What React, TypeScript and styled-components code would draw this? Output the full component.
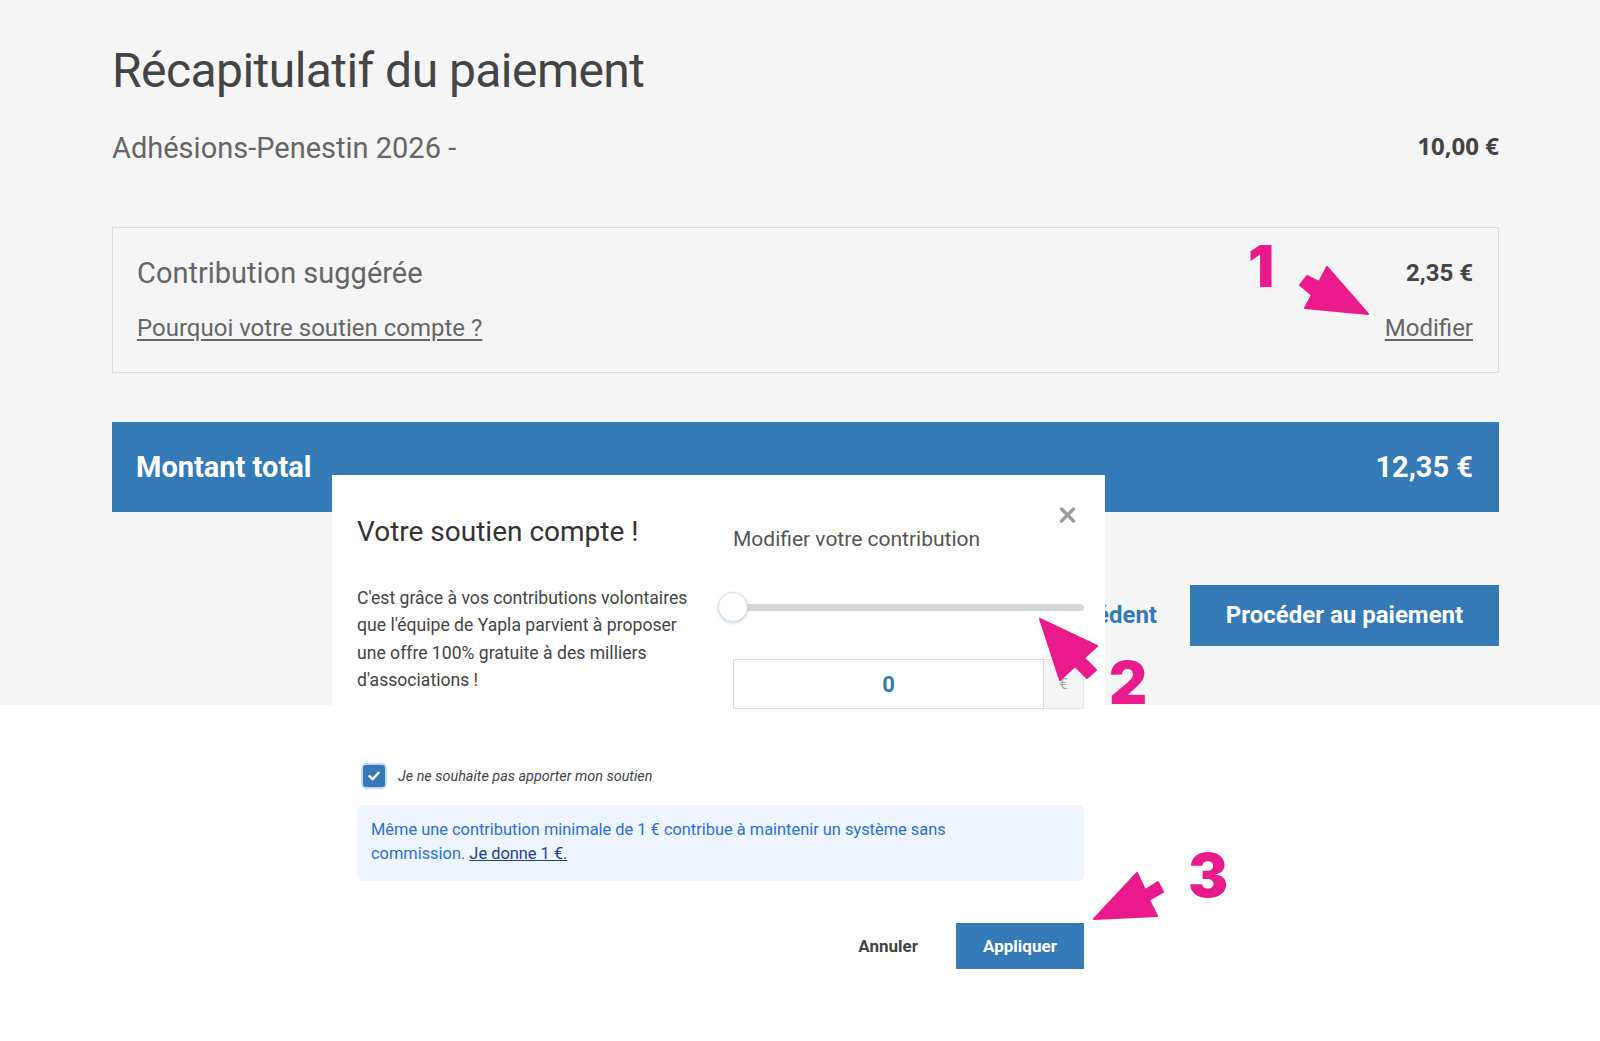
import styled, { createGlobalStyle } from "styled-components"

const GlobalStyle = createGlobalStyle`
  html, body {
    margin: 0;
    padding: 0;
    background: #ffffff;
    font-family: Roboto, "Liberation Sans", Arial, sans-serif;
  }
  * {
    box-sizing: border-box;
  }
`

const blue = "#337ab7"
const pink = "#ea1a8c"

const Page = styled.div`
  position: relative;
  width: 1600px;
  min-height: 1041px;
`

const Summary = styled.section`
  height: 705px;
  background: #f5f5f5;
  padding: 42px 0 0 112px;
`

const Content = styled.div`
  width: 1387px;
`

const Title = styled.h1`
  margin: 0;
  font-size: 48px;
  line-height: 1.2;
  font-weight: 400;
  letter-spacing: -0.55px;
  color: #444444;
`

const LineRow = styled.div`
  margin-top: 31px;
  display: flex;
  align-items: center;
  justify-content: space-between;
`

const LineLabel = styled.span`
  font-size: 29px;
  line-height: 1.2;
  color: #666666;
`

const LineAmount = styled.span`
  font-family: "Open Sans", Roboto, sans-serif;
  font-size: 24px;
  line-height: 1.2;
  font-weight: 700;
  color: #444444;
  margin-top: -3px;
`

const ContributionBox = styled.div`
  margin-top: 62px;
  border: 1px solid #dcdcdc;
  padding: 28px 25px 29px 24px;
  display: flex;
  flex-direction: column;
  gap: 23px;
`

const BoxRow = styled.div`
  display: flex;
  align-items: center;
  justify-content: space-between;
`

const BoxLabel = styled.span`
  font-size: 29px;
  line-height: 1.2;
  color: #666666;
`

const BoxAmount = styled.span`
  font-size: 24px;
  line-height: 1.2;
  font-weight: 700;
  color: #444444;
`

const TextLink = styled.a`
  font-size: 24px;
  line-height: 1.2;
  color: #666666;
  text-decoration: underline;
  text-underline-offset: 3px;
  cursor: pointer;
`

const TotalBar = styled.div`
  margin-top: 49px;
  height: 90px;
  background: ${blue};
  color: #ffffff;
  padding: 0 26px 0 24px;
  display: flex;
  align-items: center;
  justify-content: space-between;
  font-size: 29px;
  font-weight: 700;
`

const Actions = styled.div`
  margin-top: 73px;
  display: flex;
  align-items: center;
  justify-content: flex-end;
  gap: 33px;
`

const BackLink = styled.a`
  font-size: 24px;
  font-weight: 700;
  color: ${blue};
  cursor: pointer;
`

const PrimaryButton = styled.button<{ $large?: boolean }>`
  border: none;
  background: ${blue};
  color: #ffffff;
  font-family: inherit;
  font-weight: 700;
  font-size: ${(p) => (p.$large ? "24px" : "17px")};
  height: ${(p) => (p.$large ? "61px" : "46px")};
  width: ${(p) => (p.$large ? "309px" : "128px")};
  cursor: pointer;
`

const Modal = styled.div`
  position: absolute;
  left: 332px;
  top: 475px;
  width: 773px;
  background: #ffffff;
  padding: 40px 21px 40px 25px;
  z-index: 2;
`

const CloseButton = styled.button`
  position: absolute;
  top: 31px;
  right: 29px;
  width: 18px;
  height: 18px;
  padding: 0;
  border: none;
  background: none;
  display: flex;
  align-items: center;
  justify-content: center;
  cursor: pointer;
`

const ModalGrid = styled.div`
  display: grid;
  grid-template-columns: 350px 351px;
  column-gap: 26px;
`

const Column = styled.div<{ $offset?: number }>`
  display: flex;
  flex-direction: column;
  padding-top: ${(p) => p.$offset ?? 0}px;
`

const ModalTitle = styled.h2`
  margin: 0;
  font-size: 28px;
  line-height: 1.2;
  font-weight: 400;
  color: #333333;
`

const ModalText = styled.p`
  margin: 36px 0 0;
  font-size: 17.6px;
  line-height: 27.5px;
  color: #444444;
`

const FieldLabel = styled.div`
  font-size: 21px;
  line-height: 25px;
  color: #555555;
`

const Slider = styled.div`
  position: relative;
  margin-top: 40px;
  height: 30px;
  display: flex;
  align-items: center;
`

const SliderTrack = styled.div`
  width: 100%;
  height: 7px;
  border-radius: 4px;
  background: #d2d5da;
`

const SliderThumb = styled.div`
  position: absolute;
  left: -15px;
  top: 0;
  width: 30px;
  height: 30px;
  border-radius: 50%;
  background: #ffffff;
  border: 1px solid #d6deea;
  box-shadow: 0 1px 3px rgba(51, 122, 183, 0.35);
`

const AmountField = styled.div`
  margin-top: 37px;
  display: flex;
  height: 50px;
`

const AmountInput = styled.input`
  width: 311px;
  height: 50px;
  border: 1px solid #d9d9d9;
  text-align: center;
  font-family: inherit;
  font-size: 22px;
  font-weight: 700;
  color: ${blue};
  outline: none;
`

const AmountAddon = styled.span`
  flex: 1;
  display: flex;
  align-items: center;
  justify-content: center;
  background: #f4f5f7;
  border: 1px solid #e6e6e6;
  border-left: none;
  border-radius: 0 3px 3px 0;
  color: #a8a8a8;
  font-size: 15px;
`

const CheckRow = styled.label`
  margin-top: 54px;
  padding-left: 6px;
  display: flex;
  align-items: center;
  gap: 13px;
  height: 26px;
`

const CheckBox = styled.span`
  width: 22px;
  height: 22px;
  border-radius: 3px;
  background: ${blue};
  box-shadow: 0 0 0 2px #c6d9f0;
  display: flex;
  align-items: center;
  justify-content: center;
`

const CheckLabel = styled.span`
  font-size: 14.4px;
  font-style: italic;
  color: #444444;
`

const InfoBox = styled.div`
  margin-top: 16px;
  padding: 13px 14px 15px;
  border-radius: 6px;
  background: #eef5fe;
`

const InfoText = styled.p`
  margin: 0;
  max-width: 620px;
  font-size: 16.4px;
  line-height: 24px;
  color: #2d6fd6;
`

const InfoLink = styled.a`
  color: #1c3f94;
  text-decoration: underline;
  cursor: pointer;
`

const ModalFooter = styled.div`
  margin-top: 42px;
  display: flex;
  align-items: center;
  justify-content: flex-end;
  gap: 38px;
`

const GhostButton = styled.button`
  border: none;
  background: none;
  padding: 0;
  font-family: inherit;
  font-size: 17px;
  font-weight: 700;
  color: #444444;
  cursor: pointer;
`

const Annotation = styled.span<{ $left: number; $top: number; $size: number }>`
  position: absolute;
  left: ${(p) => p.$left}px;
  top: ${(p) => p.$top}px;
  font-family: Inter, "DejaVu Sans", sans-serif;
  font-weight: 900;
  font-size: ${(p) => p.$size}px;
  line-height: 1;
  color: ${pink};
  z-index: 5;
`

const ArrowSvg = styled.svg<{ $left: number; $top: number }>`
  position: absolute;
  left: ${(p) => p.$left}px;
  top: ${(p) => p.$top}px;
  z-index: 5;
  overflow: visible;
`

type ArrowProps = Readonly<{
  left: number
  top: number
  width: number
  height: number
  points: string
}>

const Arrow = ({ left, top, width, height, points }: ArrowProps) => (
  <ArrowSvg
    $left={left}
    $top={top}
    width={width}
    height={height}
    viewBox={`0 0 ${width} ${height}`}
  >
    <polygon
      points={points}
      fill={pink}
      stroke={pink}
      strokeWidth={2}
      strokeLinejoin="round"
    />
  </ArrowSvg>
)

const App = () => (
  <Page>
    <GlobalStyle />
    <Summary>
      <Content>
        <Title>Récapitulatif du paiement</Title>
        <LineRow>
          <LineLabel>Adhésions-Penestin 2026 -</LineLabel>
          <LineAmount>10,00 €</LineAmount>
        </LineRow>
        <ContributionBox>
          <BoxRow>
            <BoxLabel>Contribution suggérée</BoxLabel>
            <BoxAmount>2,35 €</BoxAmount>
          </BoxRow>
          <BoxRow>
            <TextLink>Pourquoi votre soutien compte ?</TextLink>
            <TextLink>Modifier</TextLink>
          </BoxRow>
        </ContributionBox>
        <TotalBar>
          <span>Montant total</span>
          <span>12,35 €</span>
        </TotalBar>
        <Actions>
          <BackLink>Précédent</BackLink>
          <PrimaryButton $large>Procéder au paiement</PrimaryButton>
        </Actions>
      </Content>
    </Summary>

    <Modal role="dialog">
      <CloseButton aria-label="Fermer">
        <svg width="17" height="16" viewBox="0 0 17 16">
          <path
            d="M2.5 2 L14.5 14 M14.5 2 L2.5 14"
            stroke="#9b9b9b"
            strokeWidth="3.4"
            strokeLinecap="round"
          />
        </svg>
      </CloseButton>
      <ModalGrid>
        <Column>
          <ModalTitle>Votre soutien compte !</ModalTitle>
          <ModalText>
            C'est grâce à vos contributions volontaires
            <br />
            que l'équipe de Yapla parvient à proposer
            <br />
            une offre 100% gratuite à des milliers
            <br />
            d'associations !
          </ModalText>
        </Column>
        <Column $offset={12}>
          <FieldLabel>Modifier votre contribution</FieldLabel>
          <Slider>
            <SliderTrack />
            <SliderThumb />
          </Slider>
          <AmountField>
            <AmountInput value="0" readOnly />
            <AmountAddon>€</AmountAddon>
          </AmountField>
        </Column>
      </ModalGrid>
      <CheckRow>
        <CheckBox>
          <svg width="12" height="10" viewBox="0 0 12 10">
            <path
              d="M1.5 5.2 L4.6 8.2 L10.5 1.8"
              fill="none"
              stroke="#ffffff"
              strokeWidth="2.4"
              strokeLinecap="round"
              strokeLinejoin="round"
            />
          </svg>
        </CheckBox>
        <CheckLabel>Je ne souhaite pas apporter mon soutien</CheckLabel>
      </CheckRow>
      <InfoBox>
        <InfoText>
          Même une contribution minimale de 1 € contribue à maintenir un
          système sans commission. <InfoLink>Je donne 1 €.</InfoLink>
        </InfoText>
      </InfoBox>
      <ModalFooter>
        <GhostButton>Annuler</GhostButton>
        <PrimaryButton>Appliquer</PrimaryButton>
      </ModalFooter>
    </Modal>

    <Annotation $left={1248} $top={237} $size={58}>
      1
    </Annotation>
    <Arrow
      left={1296}
      top={262}
      width={76}
      height={56}
      points="11,14 23,20 31,5 72,52 9,46 16,33 4,23"
    />
    <Arrow
      left={1036}
      top={615}
      width={66}
      height={70}
      points="4,4 61,31 48,43 60,55 51,63 39,51 24,65"
    />
    <Annotation $left={1109} $top={653} $size={59}>
      2
    </Annotation>
    <Arrow
      left={1090}
      top={868}
      width={78}
      height={56}
      points="4,51 47,5 55,22 68,14 73,24 59,32 67,48"
    />
    <Annotation $left={1188} $top={845} $size={60}>
      3
    </Annotation>
  </Page>
)

export default App
